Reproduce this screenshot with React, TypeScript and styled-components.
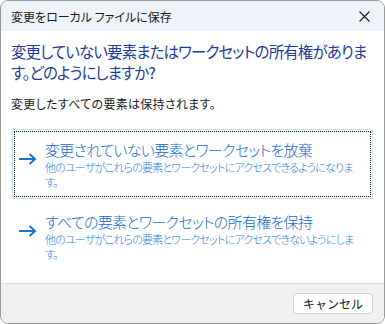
import React from "react";
import styled, { createGlobalStyle } from "styled-components";

const GlobalStyle = createGlobalStyle`
  html, body {
    margin: 0;
    padding: 0;
    background: #ffffff;
  }
  body {
    font-family: "Noto Sans CJK JP", "Noto Sans", sans-serif;
    font-feature-settings: "palt";
  }
`;

const Window = styled.div`
  box-sizing: border-box;
  width: 385px;
  height: 324px;
  border: 1px solid #9a9a9a;
  border-radius: 8px;
  overflow: hidden;
  display: flex;
  flex-direction: column;
  background: #ffffff;
`;

const TitleBar = styled.div`
  height: 30px;
  flex: none;
  background: #eef2f9;
  display: flex;
  align-items: center;
  justify-content: space-between;
  padding: 0 10px 0 10px;
  font-size: 12px;
  color: #1a1a1a;
`;

const CloseButton = styled.button`
  border: 0;
  background: transparent;
  padding: 0;
  width: 20px;
  height: 20px;
  display: flex;
  align-items: center;
  justify-content: center;
  margin-top: 1px;
`;

const Content = styled.div`
  flex: 1;
  padding: 10px 8px 0 10px;
`;

const Heading = styled.div`
  color: #1e3c9c;
  font-size: 15.5px;
  line-height: 21px;
  letter-spacing: -0.9px;
  white-space: nowrap;
`;

const Note = styled.div`
  margin-top: 13px;
  font-size: 12px;
  line-height: 16px;
  color: #1a1a1a;
  letter-spacing: 0.3px;
`;

const LinkList = styled.div`
  margin-top: 17px;
  display: flex;
  flex-direction: column;
  gap: 2px;
  margin-left: 1px;
  margin-right: 3px;
`;

const CommandLink = styled.div<{ $focused?: boolean }>`
  box-sizing: border-box;
  height: 70px;
  border: 1px solid ${(p) => (p.$focused ? "#c5dff5" : "transparent")};
  padding: 1px;
`;

const LinkInner = styled.div<{ $focused?: boolean }>`
  box-sizing: border-box;
  height: 100%;
  border: 1px dotted ${(p) => (p.$focused ? "#1a1a1a" : "transparent")};
  display: grid;
  grid-template-columns: 27px 1fr;
  padding: 8px 5px 0 3px;
`;

const ArrowCell = styled.div`
  padding-top: 6px;
`;

const LinkTitle = styled.div`
  color: #1768cb;
  font-size: 15px;
  font-weight: 300;
  line-height: 20px;
  letter-spacing: -0.7px;
`;

const LinkSub = styled.div`
  color: #2b7dd9;
  font-size: 11px;
  font-weight: 300;
  line-height: 15px;
  letter-spacing: -0.8px;
`;

const Footer = styled.div`
  height: 40px;
  flex: none;
  background: #f0f0f0;
  border-top: 1px solid #dcdcdc;
  display: flex;
  align-items: flex-start;
  justify-content: flex-end;
  padding: 9px 11px 0 0;
  box-sizing: border-box;
`;

const Button = styled.button`
  width: 80px;
  height: 21px;
  background: #fdfdfd;
  border: 1px solid #d0d0d0;
  border-radius: 4px;
  font-family: inherit;
  font-size: 12px;
  color: #1a1a1a;
  padding: 0;
  line-height: 19px;
`;

const Arrow = () => (
  <svg width="19" height="12" viewBox="0 0 19 12" fill="none">
    <path d="M1 6h16M11.5 1l5.5 5-5.5 5" stroke="#1a73d2" strokeWidth="2" strokeLinejoin="miter" />
  </svg>
);

const CloseIcon = () => (
  <svg width="11" height="11" viewBox="0 0 11 11">
    <path d="M0.5 0.5l10 10M10.5 0.5l-10 10" stroke="#1a1a1a" strokeWidth="1.1" />
  </svg>
);

const options = [
  {
    title: "変更されていない要素とワークセットを放棄",
    sub: "他のユーザがこれらの要素とワークセットにアクセスできるようになります。",
    focused: true,
  },
  {
    title: "すべての要素とワークセットの所有権を保持",
    sub: "他のユーザがこれらの要素とワークセットにアクセスできないようにします。",
    focused: false,
  },
];

export default function App() {
  return (
    <>
      <GlobalStyle />
      <Window>
        <TitleBar>
          <span>変更をローカル ファイルに保存</span>
          <CloseButton aria-label="閉じる">
            <CloseIcon />
          </CloseButton>
        </TitleBar>
        <Content>
          <Heading>
            変更していない要素またはワークセットの所有権がありま
            <br />
            す。どのようにしますか?
          </Heading>
          <Note>変更したすべての要素は保持されます。</Note>
          <LinkList>
            {options.map((o) => (
              <CommandLink key={o.title} $focused={o.focused}>
                <LinkInner $focused={o.focused}>
                  <ArrowCell>
                    <Arrow />
                  </ArrowCell>
                  <div>
                    <LinkTitle>{o.title}</LinkTitle>
                    <LinkSub>{o.sub}</LinkSub>
                  </div>
                </LinkInner>
              </CommandLink>
            ))}
          </LinkList>
        </Content>
        <Footer>
          <Button>キャンセル</Button>
        </Footer>
      </Window>
    </>
  );
}
